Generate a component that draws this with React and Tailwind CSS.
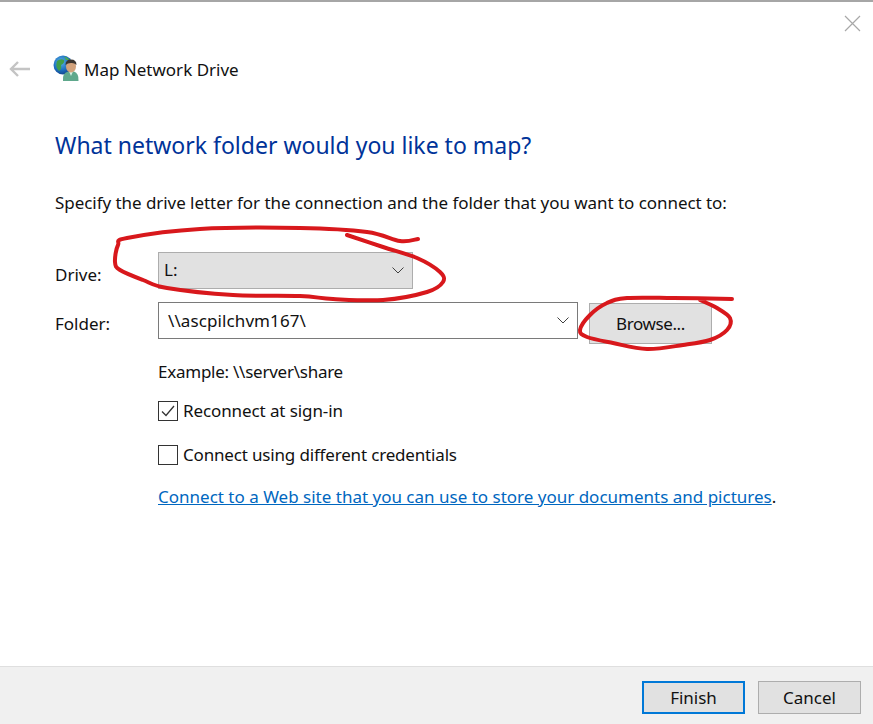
const CIRCLE_DRIVE = [
  [418, 239], [400, 241], [367, 232], [300, 228], [200, 229], [127, 238], [118, 245], [115, 262],
  [120, 270], [143, 280], [167, 288], [233, 295], [300, 296], [333, 299], [383, 300], [427, 292],
  [443, 282], [440, 272], [417, 258], [383, 247], [347, 235],
];

const CIRCLE_BROWSE = [
  [732, 299], [673, 298], [627, 298], [607, 303], [590, 315], [580, 330], [587, 337], [613, 343],
  [647, 349], [683, 345], [710, 340], [727, 330], [730, 318], [717, 308], [700, 300],
];

// catmull-rom through the points, so the marker strokes look hand drawn
function smooth(pts) {
  let d = `M${pts[0][0]} ${pts[0][1]}`;
  for (let i = 0; i < pts.length - 1; i++) {
    const p0 = pts[i - 1] || pts[i];
    const p1 = pts[i];
    const p2 = pts[i + 1];
    const p3 = pts[i + 2] || p2;
    const c1x = p1[0] + (p2[0] - p0[0]) / 6;
    const c1y = p1[1] + (p2[1] - p0[1]) / 6;
    const c2x = p2[0] - (p3[0] - p1[0]) / 6;
    const c2y = p2[1] - (p3[1] - p1[1]) / 6;
    d += ` C${c1x} ${c1y} ${c2x} ${c2y} ${p2[0]} ${p2[1]}`;
  }
  return d;
}

function Chevron() {
  return (
    <svg width="12" height="7" viewBox="0 0 12 7" fill="none" stroke="#404040" strokeWidth="1">
      <path d="M0.5 0.5 L6 6 L11.5 0.5" />
    </svg>
  );
}

function DriveIcon() {
  return (
    <svg width="26" height="26" viewBox="0 0 26 26">
      <defs>
        <radialGradient id="globe" cx="0.4" cy="0.35" r="0.7">
          <stop offset="0" stopColor="#5fb4e8" />
          <stop offset="0.6" stopColor="#1c6fc0" />
          <stop offset="1" stopColor="#123f86" />
        </radialGradient>
      </defs>
      <circle cx="10" cy="10" r="9.5" fill="url(#globe)" />
      <path d="M4 6 Q8 3 11 5 Q12 8 8 10 Q9 14 6 16 Q2 12 4 6Z" fill="#3f9e4c" />
      <path d="M11 1.5 Q15 2 17 5 L13 5Z" fill="#4aa858" />
      <path d="M10 26 Q9 18 15 16.5 L21 16.5 Q26 18 25.5 26Z" fill="#5fa88c" />
      <path d="M16 16.5 L18 21 L20 16.5Z" fill="#d8efe4" />
      <ellipse cx="18" cy="11.5" rx="5" ry="6" fill="#d2a27c" />
      <path d="M12.5 10 Q12.5 4.5 18 4.5 Q23.5 4.5 23.5 10 Q21 7.5 18 8 Q14.5 8 12.5 10Z" fill="#3b3530" />
    </svg>
  );
}

function Checkbox({ checked, label, className }) {
  return (
    <div className="flex items-center gap-[5px] h-[20px]">
      <div className="w-[20px] h-[20px] border border-[#333333] bg-white flex items-center justify-center">
        {checked && (
          <svg width="14" height="12" viewBox="0 0 14 12" fill="none" stroke="#333333" strokeWidth="1.3">
            <path d="M1 6.5 L5 10.5 L13 1" />
          </svg>
        )}
      </div>
      <span className={className}>{label}</span>
    </div>
  );
}

export default function App() {
  return (
    <div
      className="relative w-[873px] h-[724px] flex flex-col bg-white text-[#111111] text-[17px] overflow-hidden border-t-2 border-[#a6a6a6]"
      style={{ fontFamily: '"Noto Sans", "Open Sans", sans-serif' }}
    >
      {/* Title row */}
      <div className="flex justify-end pt-[13px] pr-[12px] h-[46px]">
        <svg width="17" height="17" viewBox="0 0 17 17" stroke="#a8a8a8" strokeWidth="1.2">
          <path d="M1 1 L16 16 M16 1 L1 16" />
        </svg>
      </div>
      <div className="flex items-center pl-[9px] h-[42px]">
        <svg width="21" height="16" viewBox="0 0 21 16" fill="none" stroke="#c4c4c4" strokeWidth="2.4">
          <path d="M21 8 H2 M9 1 L2 8 L9 15" />
        </svg>
        <div className="ml-[23px] mr-[5px] -mt-[2px]">
          <DriveIcon />
        </div>
        <span className="text-[17px] leading-none">Map Network Drive</span>
      </div>

      {/* Body */}
      <div className="flex-1 flex flex-col pl-[55px]">
        <h1 className="mt-[39px] text-[23px] leading-[32px] text-[#003399]">What network folder would you like to map?</h1>
        <p className="mt-[30px] leading-[24px] tracking-[-0.05px]">Specify the drive letter for the connection and the folder that you want to connect to:</p>

        <div className="mt-[36px] flex items-center h-[38px]">
          <span className="w-[103px] pt-[10px]">Drive:</span>
          <div className="w-[255px] h-[37px] bg-[#e1e1e1] border border-[#adadad] flex items-center justify-between pl-[5px] pr-[8px]">
            <span>L:</span>
            <Chevron />
          </div>
        </div>
        <div className="mt-[13px] flex items-start">
          <span className="w-[103px] pt-[9px]">Folder:</span>
          <div className="w-[420px] h-[37px] bg-white border border-[#7a7a7a] flex items-center justify-between pl-[9px] pr-[8px]">
            <span className="tracking-[0.1px]">\\ascpilchvm167\</span>
            <Chevron />
          </div>
          <button className="ml-[11px] mt-[1px] w-[123px] h-[41px] bg-[#e1e1e1] border border-[#adadad] tracking-[-0.4px]">Browse...</button>
        </div>

        <div className="ml-[103px] flex flex-col">
          <p className="mt-[16px] leading-[24px] tracking-[-0.25px]">Example: \\server\share</p>
          <div className="mt-[17px]">
            <Checkbox checked label="Reconnect at sign-in" className="tracking-[-0.1px]" />
          </div>
          <div className="mt-[24px]">
            <Checkbox label="Connect using different credentials" className="tracking-[-0.17px]" />
          </div>
          <p className="mt-[20px] leading-[24px]">
            <a className="text-[#0067c0] underline">Connect to a Web site that you can use to store your documents and pictures</a>.
          </p>
        </div>
      </div>

      {/* Footer */}
      <div className="h-[58px] bg-[#f0f0f0] border-t border-[#dfdfdf] flex justify-end items-start pt-[14px] pr-[12px] gap-[13px]">
        <button className="w-[103px] h-[33px] bg-[#e1e1e1] border-2 border-[#0078d7]">Finish</button>
        <button className="w-[103px] h-[33px] bg-[#e1e1e1] border border-[#adadad]">Cancel</button>
      </div>

      {/* Red marker annotations drawn on top of the screenshot */}
      <svg className="absolute -top-[2px] left-0 pointer-events-none" width="873" height="724" fill="none" stroke="#d8181c" strokeWidth="4" strokeLinecap="round" strokeLinejoin="round">
        <path d={smooth(CIRCLE_DRIVE)} />
        <path d={smooth(CIRCLE_BROWSE)} />
      </svg>
    </div>
  );
}
